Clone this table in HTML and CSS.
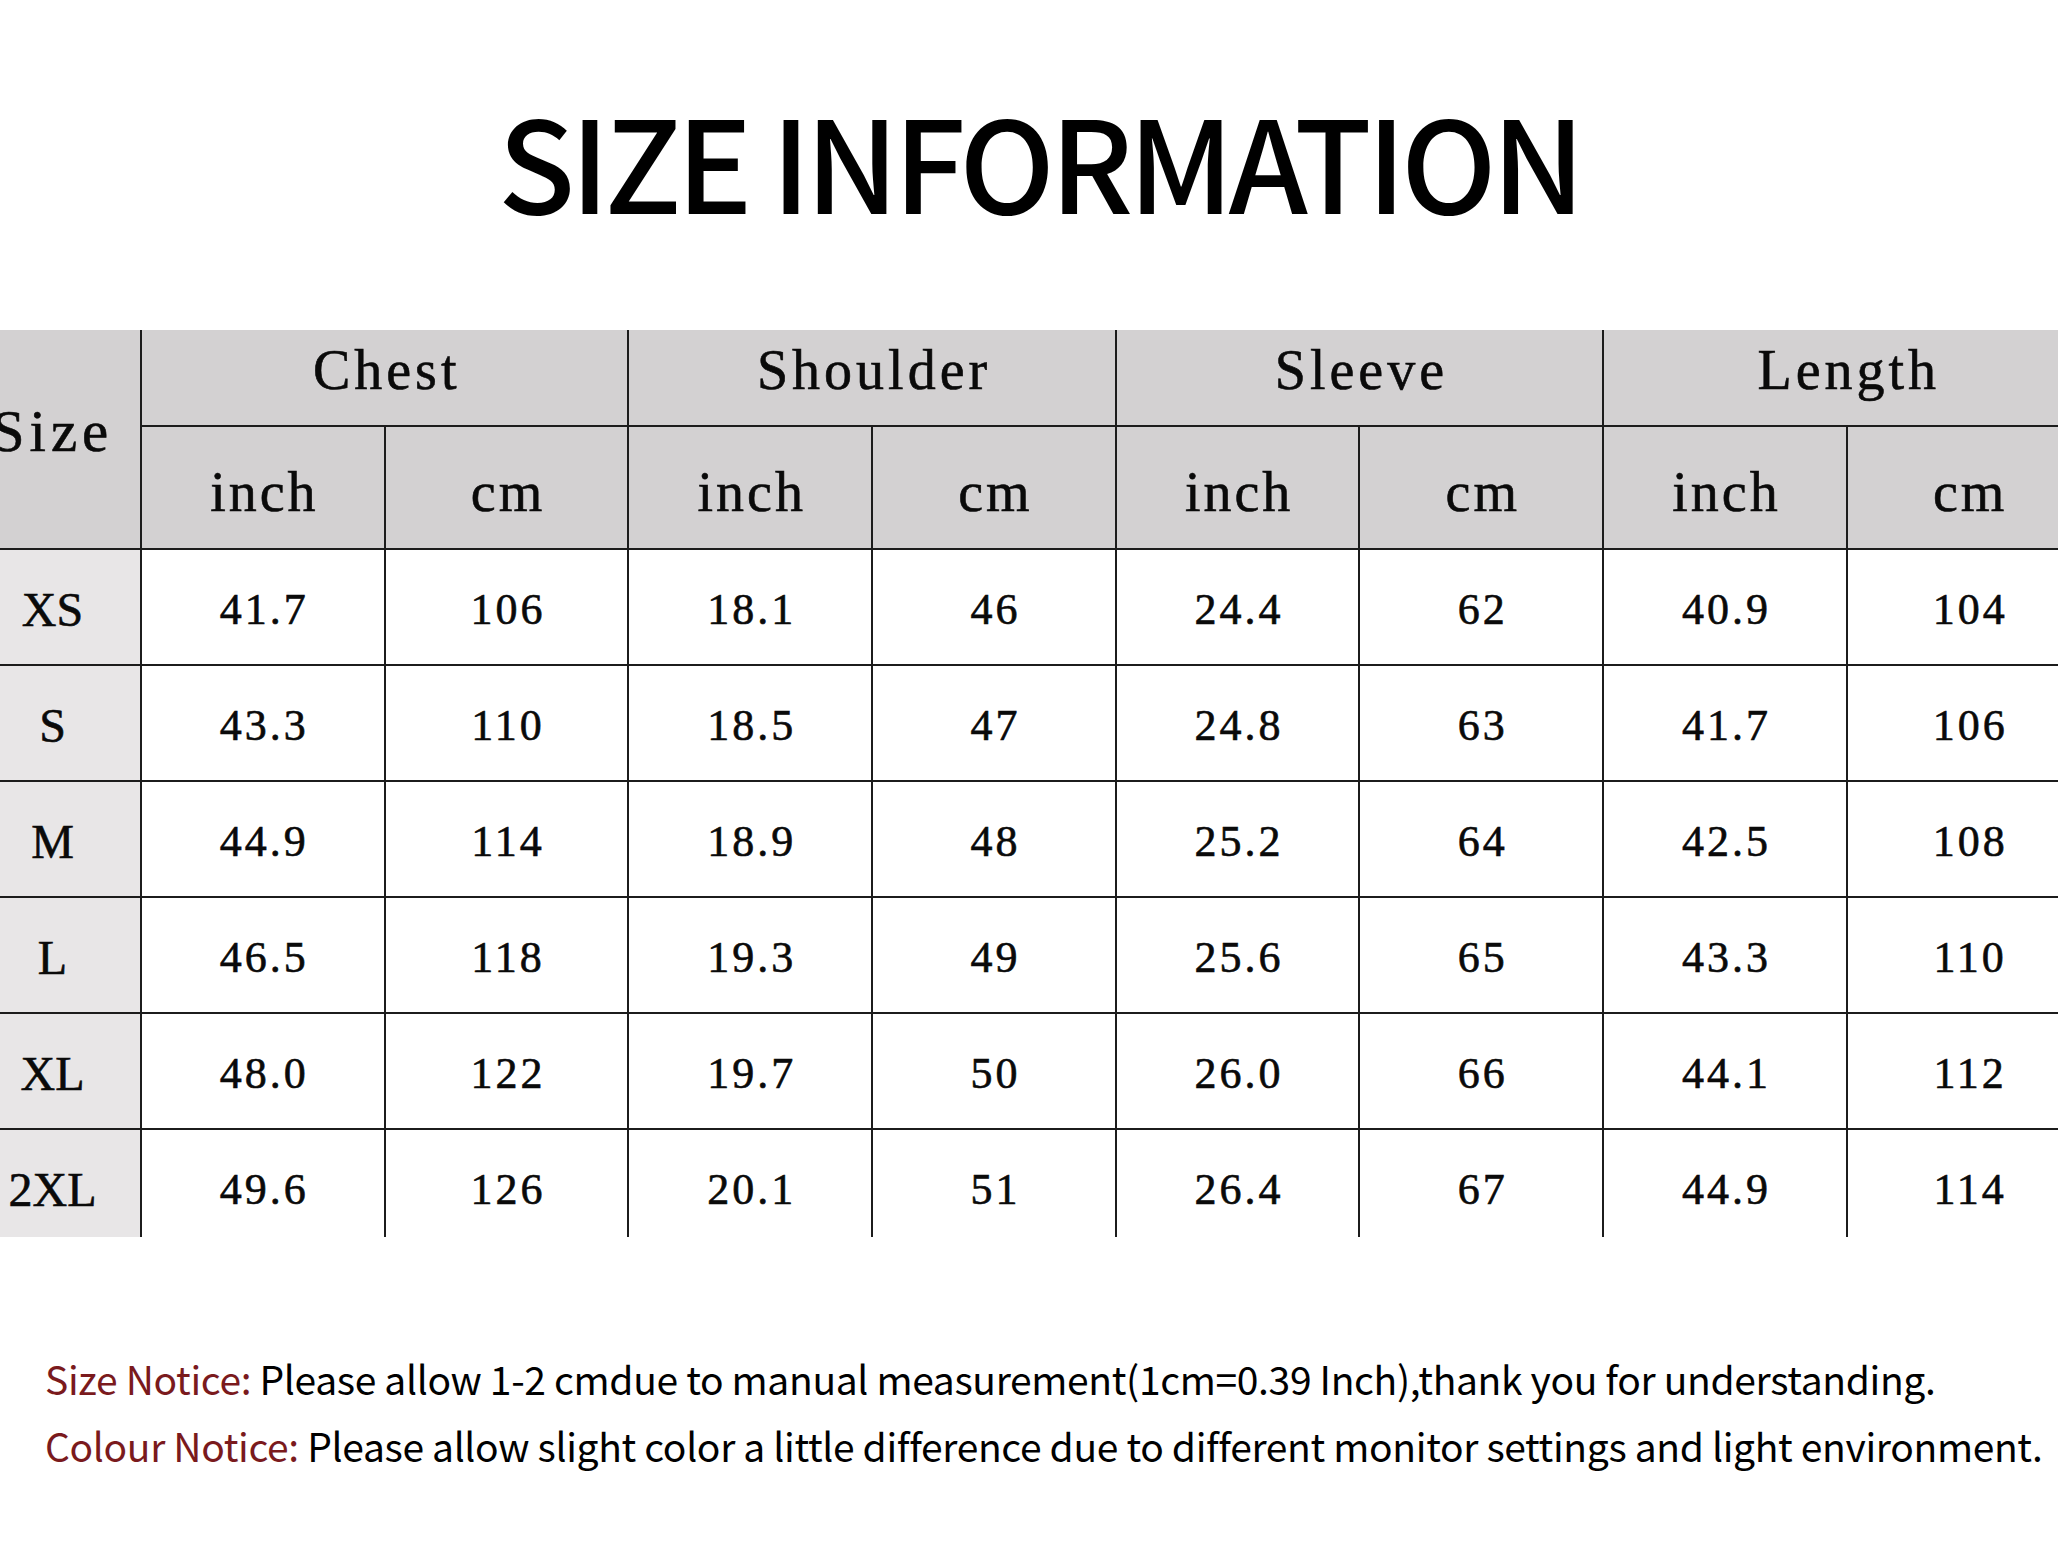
FILE: index.html
```html
<!DOCTYPE html>
<html lang="en">
<head>
<meta charset="utf-8">
<title>Size Information</title>
<link rel="stylesheet" href="styles.css">
</head>
<body>
<main class="page">
  <h1 class="title">SIZE INFORMATION</h1>
  <div class="table-wrap">
    <table class="size-table">
      <colgroup>
        <col class="c-size">
        <col class="c-val"><col class="c-val">
        <col class="c-val"><col class="c-val">
        <col class="c-val"><col class="c-val">
        <col class="c-val"><col class="c-val">
      </colgroup>
      <thead>
        <tr class="hdr1">
          <th class="size-head" rowspan="2">Size</th>
          <th colspan="2">Chest</th>
          <th colspan="2">Shoulder</th>
          <th colspan="2">Sleeve</th>
          <th colspan="2">Length</th>
        </tr>
        <tr class="hdr2">
          <th>inch</th><th>cm</th>
          <th>inch</th><th>cm</th>
          <th>inch</th><th>cm</th>
          <th>inch</th><th>cm</th>
        </tr>
      </thead>
      <tbody>
        <tr><th class="size-cell">XS</th><td>41.7</td><td>106</td><td>18.1</td><td>46</td><td>24.4</td><td>62</td><td>40.9</td><td>104</td></tr>
        <tr><th class="size-cell">S</th><td>43.3</td><td>110</td><td>18.5</td><td>47</td><td>24.8</td><td>63</td><td>41.7</td><td>106</td></tr>
        <tr><th class="size-cell">M</th><td>44.9</td><td>114</td><td>18.9</td><td>48</td><td>25.2</td><td>64</td><td>42.5</td><td>108</td></tr>
        <tr><th class="size-cell">L</th><td>46.5</td><td>118</td><td>19.3</td><td>49</td><td>25.6</td><td>65</td><td>43.3</td><td>110</td></tr>
        <tr><th class="size-cell">XL</th><td>48.0</td><td>122</td><td>19.7</td><td>50</td><td>26.0</td><td>66</td><td>44.1</td><td>112</td></tr>
        <tr class="last"><th class="size-cell">2XL</th><td>49.6</td><td>126</td><td>20.1</td><td>51</td><td>26.4</td><td>67</td><td>44.9</td><td>114</td></tr>
      </tbody>
    </table>
  </div>
  <div class="notices">
    <p class="notice"><span class="label">Size Notice:</span> Please allow 1-2 cmdue to manual measurement(1cm=0.39 Inch),thank you for understanding.</p>
    <p class="notice"><span class="label">Colour Notice:</span> Please allow slight color a little difference due to different monitor settings and light environment.</p>
  </div>
</main>
</body>
</html>
```
FILE: styles.css
```css
html, body {
  margin: 0;
  padding: 0;
  background: #ffffff;
}

.page {
  width: 2058px;
  height: 1568px;
  overflow: hidden;
  background: #ffffff;
}

.title {
  margin: 0;
  padding-top: 96px;
  padding-left: 20px;
  height: 127px;
  line-height: 127px;
  font-family: "Noto Sans CJK SC", "Noto Sans", sans-serif;
  font-weight: 500;
  font-size: 127px;
  letter-spacing: -5px;
  text-align: center;
  color: #000000;
  white-space: nowrap;
}

.table-wrap {
  margin-top: 107px;
  height: 907px;
  width: 2058px;
  overflow: hidden;
}

.size-table {
  margin-left: -35px;
  border-collapse: collapse;
  table-layout: fixed;
  width: 2125.6px;
  font-family: "Liberation Serif", "Times New Roman", serif;
  color: #0a0a0a;
}

.c-size { width: 176px; }
.c-val { width: 243.7px; }

.size-table th,
.size-table td {
  border: 2px solid #1c1c1c;
  padding: 0;
  text-align: center;
  vertical-align: middle;
  font-weight: normal;
  white-space: nowrap;
  line-height: 1.1;
  -webkit-text-stroke: 0.6px #0a0a0a;
}

.hdr1 {
  height: 96px;
}

.hdr1 th {
  border-top: none;
  background: #d3d1d2;
  font-size: 56px;
  letter-spacing: 4px;
  padding-bottom: 14px;
  padding-left: 4px;
}

.hdr2 {
  height: 123px;
}

.hdr2 th {
  background: #d3d1d2;
  font-size: 56px;
  letter-spacing: 3px;
  padding-top: 10px;
  padding-left: 3px;
}

.size-table th.size-head {
  border-left: none;
  background: #d3d1d2;
  font-size: 59px;
  letter-spacing: 5px;
  padding: 0 0 15px 0;
}

.size-table tbody tr {
  height: 116px;
}

.size-table th.size-cell {
  border-left: none;
  background: #e8e6e7;
  font-size: 48px;
  padding-top: 7px;
}

.size-table td {
  background: #ffffff;
  font-size: 44px;
  letter-spacing: 3px;
  padding-top: 7px;
  padding-left: 3px;
}

.notices {
  margin-top: 108px;
  padding-left: 45px;
  font-family: "Noto Sans CJK SC", "Noto Sans", sans-serif;
  font-size: 39px;
  letter-spacing: -0.35px;
  line-height: 67px;
  color: #000000;
}

.notice {
  margin: 0;
  white-space: nowrap;
}

.label {
  color: #7a1a1d;
}
```
